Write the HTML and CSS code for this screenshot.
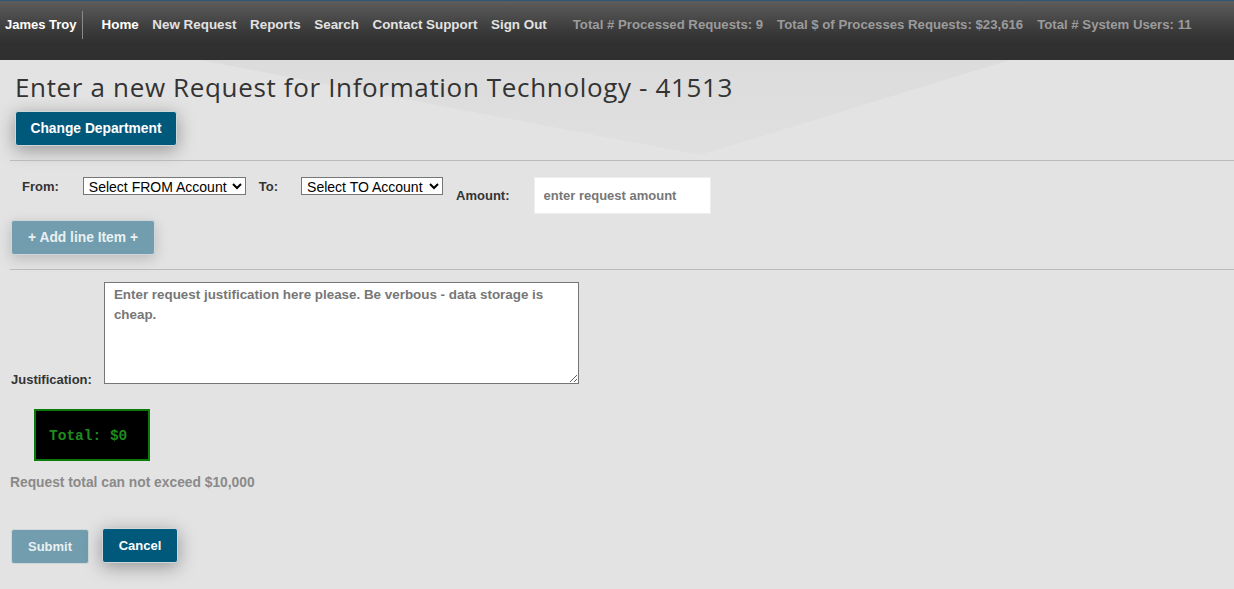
FILE: index.html
```html
<!DOCTYPE html>
<html lang="en">
<head>
<meta charset="utf-8">
<title>New Request</title>
<link rel="stylesheet" href="styles.css">
</head>
<body>
<div class="backdrop" aria-hidden="true"></div>
<header class="topbar">
  <span class="user">James Troy</span>
  <nav class="nav">
    <a class="nav-link active" href="#">Home</a>
    <a class="nav-link" href="#">New Request</a>
    <a class="nav-link" href="#">Reports</a>
    <a class="nav-link" href="#">Search</a>
    <a class="nav-link" href="#">Contact Support</a>
    <a class="nav-link" href="#">Sign Out</a>
  </nav>
  <div class="stats">
    <span class="stat">Total # Processed Requests: 9</span>
    <span class="stat">Total $ of Processes Requests: $23,616</span>
    <span class="stat">Total # System Users: 11</span>
  </div>
</header>
<main class="page">
  <h1 class="title">Enter a new Request for Information Technology - 41513</h1>
  <button class="btn btn-primary btn-change">Change Department</button>
  <hr class="rule rule-first">
  <div class="line-row">
    <label class="field-label">From:</label>
    <select class="acct acct-from"><option>Select FROM Account</option></select>
    <label class="field-label">To:</label>
    <select class="acct acct-to"><option>Select TO Account</option></select>
    <label class="field-label amount-label">Amount:</label>
    <input class="amount" type="text" placeholder="enter request amount">
  </div>
  <button class="btn btn-muted btn-add">+ Add line Item +</button>
  <hr class="rule rule-second">
  <div class="justify-row">
    <label class="justify-label">Justification:</label>
    <textarea class="justify" placeholder="Enter request justification here please. Be verbous - data storage is cheap."></textarea>
  </div>
  <div class="total-box">Total: $0</div>
  <p class="limit-note">Request total can not exceed $10,000</p>
  <div class="actions">
    <button class="btn btn-muted btn-submit">Submit</button>
    <button class="btn btn-primary btn-cancel">Cancel</button>
  </div>
</main>
</body>
</html>
```
FILE: styles.css
```css
* { box-sizing: border-box; }
html, body { margin: 0; padding: 0; }
body {
  background: #e3e3e3;
  font-family: "Liberation Sans", Arial, sans-serif;
  color: #333;
  min-height: 589px;
  position: relative;
  overflow: hidden;
}
.backdrop {
  position: absolute;
  left: 0; top: 60px; width: 1234px; height: 120px;
  background: linear-gradient(rgba(0,0,0,0.03), rgba(0,0,0,0.01));
  clip-path: polygon(200px 0, 1010px 0, 700px 95px);
  z-index: 0;
}
.topbar {
  position: relative;
  z-index: 1;
  height: 60px;
  border-top: 1px solid #2d5677;
  background: linear-gradient(#5d5d5d 0, #3c3c3c 28px, #303030 42px, #2f2f2f 100%);
  display: flex;
  align-items: flex-start;
  padding: 10px 0 0 5px;
  font-size: 13px;
  font-weight: bold;
  line-height: 28px;
}
.user {
  color: #fff;
  padding-right: 5px;
  border-right: 1px solid #8a8a8a;
  height: 28px;
}
.nav { display: flex; gap: 13.6px; margin-left: 19px; font-size: 13.4px; }
.nav-link { color: #e2e2e2; text-decoration: none; }
.nav-link.active { color: #fff; }
.stats { display: flex; gap: 14px; margin-left: 26px; font-size: 13.2px; }
.stat { color: #9b9b9b; font-weight: bold; }

.page {
  position: relative;
  z-index: 1;
  padding: 0 0 0 10px;
}
.title {
  margin: 12px 0 0 5px;
  font-family: "Open Sans", "Noto Sans", sans-serif;
  font-weight: normal;
  font-size: 26px;
  letter-spacing: 0.65px;
  line-height: 30px;
  color: #333;
}
.btn {
  display: block;
  border: 1px solid #cfd6da;
  border-radius: 3px;
  font-family: "Liberation Sans", Arial, sans-serif;
  font-weight: bold;
  font-size: 13px;
  height: 35px;
  padding: 0 8px;
  cursor: pointer;
}
.btn-primary { background: #00587a; color: #fff; box-shadow: 0 4px 18px rgba(0,0,0,.35); }
.btn-muted { background: #719dae; color: #e9f0f2; }
.btn-change { margin: 9px 0 0 5px; width: 162px; font-size: 13.8px; }
.rule {
  border: 0;
  border-top: 1px solid #bbbbbb;
  margin: 0;
}
.rule-first { margin-top: 14px; }
.line-row {
  display: flex;
  align-items: flex-start;
  margin-top: 16px;
  padding-left: 12px;
}
.field-label {
  font-size: 13px;
  font-weight: bold;
  color: #333;
  line-height: 17px;
  margin-top: 1px;
}
.acct {
  font-family: "Liberation Sans", Arial, sans-serif;
  font-size: 14px;
  height: 18px;
  margin-top: 0;
  padding: 0 0 0 1px;
  border: 1px solid #767676;
  border-radius: 0;
  background: #fff;
  color: #000;
}
.acct-from { width: 163px; margin-left: 24px; margin-right: 13px; }
.acct-to { width: 142px; margin-left: 23px; margin-right: 13px; }
.amount-label { line-height: 37px; margin-top: 0; }
.amount {
  margin-left: 24px;
  width: 177px;
  height: 37px;
  border: 1px solid #eeeeee;
  background: #fff;
  padding: 0 9px;
  font-family: "Liberation Sans", Arial, sans-serif;
  font-size: 13px;
  font-weight: bold;
}
.amount::placeholder { color: #777; }
.btn-add { margin: 6px 0 0 1px; width: 144px; font-size: 13.8px; box-shadow: 0 4px 14px rgba(0,0,0,.18); }
.rule-second { margin-top: 14px; }
.justify-row {
  display: flex;
  align-items: flex-end;
  margin-top: 12px;
  padding-left: 1px;
}
.justify-label {
  font-size: 13px;
  font-weight: bold;
  color: #333;
  line-height: 17px;
  margin-bottom: -4px;
}
.justify {
  margin-left: 12px;
  width: 475px;
  height: 102px;
  border: 1px solid #767676;
  padding: 2px 9px;
  font-family: "Liberation Sans", Arial, sans-serif;
  font-size: 13.4px;
  font-weight: bold;
  line-height: 20px;
  resize: both;
}
.justify::placeholder { color: #777; }
.total-box {
  margin: 25px 0 0 24px;
  width: 116px;
  height: 52px;
  background: #000;
  border: 2px solid #0a7a0a;
  color: #1f8a1f;
  font-family: "Liberation Mono", "Courier New", monospace;
  font-weight: bold;
  font-size: 14.5px;
  display: flex;
  align-items: center;
  padding: 2px 0 0 13px;
}
.limit-note {
  margin: 13px 0 0 0;
  font-size: 13.8px;
  font-weight: bold;
  color: #8a8a8a;
  line-height: 17px;
}
.actions {
  display: flex;
  align-items: flex-start;
  gap: 13px;
  margin-top: 37px;
  padding-left: 1px;
}
.btn-submit { width: 78px; margin-top: 1px; }
.btn-cancel { width: 76px; }
```
